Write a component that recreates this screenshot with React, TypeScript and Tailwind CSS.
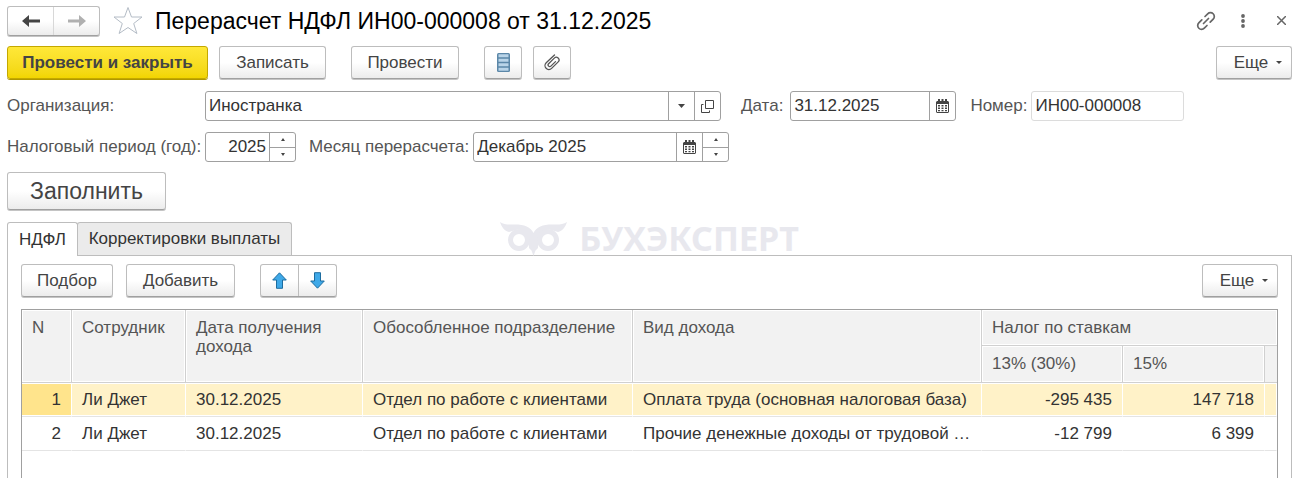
import { ReactNode } from "react";

const buttonBase =
  "flex items-center justify-center rounded-[3px] border border-[#bdbdbd] border-b-[#a0a0a0] bg-linear-to-b from-white from-50% to-[#ececec] text-[#444] shadow-[0_1px_0_#c4c4c4]";

const rows = [
  {
    n: 1,
    employee: "Ли Джет",
    date: "30.12.2025",
    department: "Отдел по работе с клиентами",
    income: "Оплата труда (основная налоговая база)",
    tax13: "-295 435",
    tax15: "147 718",
  },
  {
    n: 2,
    employee: "Ли Джет",
    date: "30.12.2025",
    department: "Отдел по работе с клиентами",
    income: "Прочие денежные доходы от трудовой …",
    tax13: "-12 799",
    tax15: "6 399",
  },
];

function ToolButton({ label, children, className }: { label?: string; children: ReactNode; className: string }) {
  return (
    <button type="button" aria-label={label} className={`${buttonBase} h-[33px] ${className}`}>
      {children}
    </button>
  );
}

function MoreButton() {
  return (
    <button type="button" className={`${buttonBase} h-[33px] w-[76px] gap-2 pl-2`}>
      Еще
      <svg className="h-[3px] w-[6px]" viewBox="0 0 6 3" fill="#444">
        <path d="M0 0h6L3 3z" />
      </svg>
    </button>
  );
}

function CalendarIcon() {
  return (
    <svg className="h-[14px] w-[13px]" viewBox="0 0 13 14">
      <path fill="#444" d="M1 2h1V0h2v2h1.500V0h2v2H9V0h2v2h1l1 1v10l-1 1H1l-1-1V3z" />
      <path fill="#fff" d="M1 5h11v8H1z" />
      <path
        fill="#444"
        d="M2 6h2v1.500H2zM5.500 6h2v1.500h-2zM9 6h2v1.500H9zM2 8.500h2V10H2zM5.500 8.500h2V10h-2zM9 8.500h2V10H9zM2 11h2v1.300H2zM5.500 11h2v1.300h-2zM9 11h2v1.300H9z"
      />
    </svg>
  );
}

function Spinner({ label }: { label: string }) {
  return (
    <div className="flex w-[26px] shrink-0 flex-col border-l border-[#a0a0a0]">
      <button type="button" aria-label={`${label}: больше`} className="flex flex-1 items-center justify-center border-b border-[#a0a0a0]">
        <svg className="h-[3px] w-[4px]" viewBox="0 0 4 3" fill="#444">
          <path d="M0 3h4L2 0z" />
        </svg>
      </button>
      <button type="button" aria-label={`${label}: меньше`} className="flex flex-1 items-center justify-center">
        <svg className="h-[3px] w-[4px]" viewBox="0 0 4 3" fill="#444">
          <path d="M0 0h4L2 3z" />
        </svg>
      </button>
    </div>
  );
}

function FieldButton({ label, children }: { label: string; children: ReactNode }) {
  return (
    <button
      type="button"
      aria-label={label}
      className="flex w-[26px] shrink-0 items-center justify-center border-l border-[#a0a0a0]"
    >
      {children}
    </button>
  );
}

function Watermark() {
  return (
    <div className="pointer-events-none absolute inset-x-0 top-0 flex justify-center gap-3 text-[#e8e8ee]">
      <svg className="h-[34px] w-[67px]" viewBox="0 0 67 34" fill="none">
        <path
          fill="currentColor"
          d="M0 0c4 3 9 2.500 15 2.500C24 2.500 31 5 33.500 11 36 5 43 2.500 52 2.500 58 2.500 63 3 67 0c-1.500 5-4.500 9-9 10l-10-3-9 6-1 13-2.500 2.500-2 5.500-2-5.500L29 26l-1-13-9-6L9 10C4.500 9 1.500 5 0 0z"
        />
        <circle cx="19" cy="18" r="8.500" fill="#fff" stroke="currentColor" strokeWidth="5" />
        <circle cx="48" cy="18" r="8.500" fill="#fff" stroke="currentColor" strokeWidth="5" />
      </svg>
      <span className="font-['Noto_Sans',sans-serif] text-[34px] leading-[32px] font-bold">БУХЭКСПЕРТ</span>
    </div>
  );
}

export default function App() {
  const headCell =
    "border-r border-b border-[#d0d0d0] bg-[#f2f2f2] px-[10px] pt-[8px] text-left align-top leading-[19px] font-normal text-[#555] shadow-[inset_1px_1px_0_#fff,inset_-1px_-1px_0_#fff]";

  return (
    <main className="flex min-h-screen flex-col bg-white pt-[5px] pr-[8px] pl-[7px] font-['Liberation_Sans',Arial,sans-serif] text-[17px] leading-[20px] text-[#333]">
      {/* Title */}
      <header className="flex h-[31px] items-center">
        <div className={`${buttonBase} h-[30px] w-[93px]`}>
          <button type="button" aria-label="Назад" className="flex h-full flex-1 items-center justify-center border-r border-[#d8d8d8]">
            <svg className="h-[14px] w-[18px]" viewBox="0 0 18 14" fill="#444">
              <path d="M0 7l7-6v4.500h11v3H7V13z" />
            </svg>
          </button>
          <button type="button" aria-label="Вперед" className="flex h-full flex-1 items-center justify-center">
            <svg className="h-[14px] w-[18px]" viewBox="0 0 18 14" fill="#b0b0b0">
              <path d="M18 7l-7-6v4.500H0v3h11V13z" />
            </svg>
          </button>
        </div>
        <button type="button" aria-label="В избранное" className="ml-[13px]">
          <svg className="h-[29px] w-[30px]" viewBox="0 0 30 29" fill="#fff" stroke="#b4bcc6">
            <path d="M15 1.500l3.500 9.500H29l-8.300 6.500 3.200 10L15 21.500l-8.900 6 3.200-10L1 11h10.500z" />
          </svg>
        </button>
        <h1 className="ml-3 text-[23px] leading-[28px] text-black">Перерасчет НДФЛ ИН00-000008 от 31.12.2025</h1>
        <div className="ml-auto flex items-center text-[#666]">
          <button type="button" aria-label="Ссылка">
            <svg className="h-[20px] w-[20px]" viewBox="0 0 20 20" fill="none" stroke="currentColor" strokeWidth="1.700" strokeLinecap="round">
              <path d="M9 5.500l2.700-2.700a3.800 3.800 0 0 1 5.500 5.400l-3 3M11 14.500l-2.700 2.700a3.800 3.800 0 0 1-5.500-5.400l3-3M7.500 12.500l5-5" />
            </svg>
          </button>
          <button type="button" aria-label="Меню" className="ml-[25px]">
            <svg className="h-[14px] w-[4px]" viewBox="0 0 4 14" fill="currentColor">
              <circle cx="2" cy="2" r="1.900" />
              <circle cx="2" cy="7" r="1.900" />
              <circle cx="2" cy="12" r="1.900" />
            </svg>
          </button>
          <button type="button" aria-label="Закрыть" className="mr-[6px] ml-[32px]">
            <svg className="h-[9px] w-[9px]" viewBox="0 0 9 9" stroke="currentColor" strokeWidth="1.500">
              <path d="M0 0l9 9M9 0L0 9" />
            </svg>
          </button>
        </div>
      </header>

      {/* Commands */}
      <div className="mt-[10px] flex">
        <button
          type="button"
          className="h-[33px] w-[201px] rounded-[3px] border border-[#c4a800] bg-linear-to-b from-[#ffe838] to-[#f2d500] font-bold text-[#444] shadow-[0_1px_0_#b09800]"
        >
          Провести и закрыть
        </button>
        <ToolButton className="ml-[11px] w-[107px]">Записать</ToolButton>
        <ToolButton className="ml-[25px] w-[108px]">Провести</ToolButton>
        <ToolButton label="Движения документа" className="ml-[25px] w-[38px]">
          <svg className="h-[19px] w-[13px]" viewBox="0 0 13 19">
            <rect width="13" height="19" rx="1.500" fill="#5b87a8" />
            <path fill="#b9d4e8" d="M1.500 1.200h10v3h-10zM1.500 5.700h10v3h-10zM1.500 10.200h10v3h-10zM1.500 14.700h10v3h-10z" />
          </svg>
        </ToolButton>
        <ToolButton label="Присоединенные файлы" className="ml-[11px] w-[38px]">
          <svg className="h-[17px] w-[16px]" viewBox="0 0 16 17" fill="none" stroke="#555" strokeWidth="1.300" strokeLinecap="round">
            <path d="M10.500 1L2.200 8.800a3.800 3.800 0 0 0 5.400 5.600l6.600-6.500a2.700 2.700 0 0 0-3.900-3.800L4.600 9.800a1.600 1.600 0 0 0 2.300 2.300l4.600-4.500" />
          </svg>
        </ToolButton>
        <div className="ml-auto">
          <MoreButton />
        </div>
      </div>

      {/* Fields */}
      <div className="mt-[12px] flex items-center">
        <label htmlFor="organization" className="w-[198px] text-[#555]">Организация:</label>
        <div className="flex h-[30px] w-[516px] rounded-[3px] border border-[#a0a0a0]">
          <input id="organization" defaultValue="Иностранка" className="min-w-0 flex-1 px-[3px] outline-none" />
          <FieldButton label="Выбрать">
            <svg className="h-[4px] w-[7px]" viewBox="0 0 7 4" fill="#444">
              <path d="M0 0h7L3.500 4z" />
            </svg>
          </FieldButton>
          <FieldButton label="Открыть">
            <svg className="h-[13px] w-[13px]" viewBox="0 0 13 13" fill="none" stroke="#444">
              <path d="M4.500.5h8v8h-8zM2.500 4.500h-2v8h8v-2" />
            </svg>
          </FieldButton>
        </div>
        <label htmlFor="date" className="ml-[20px] text-[#555]">Дата:</label>
        <div className="ml-[7px] flex h-[30px] w-[166px] rounded-[3px] border border-[#a0a0a0]">
          <input id="date" defaultValue="31.12.2025" className="min-w-0 flex-1 px-[3px] outline-none" />
          <FieldButton label="Календарь">
            <CalendarIcon />
          </FieldButton>
        </div>
        <label htmlFor="number" className="ml-[14px] text-[#555]">Номер:</label>
        <input
          id="number"
          readOnly
          value="ИН00-000008"
          className="ml-[4px] h-[30px] w-[153px] rounded-[3px] border border-[#dcdcdc] px-[3px] outline-none"
        />
      </div>
      <div className="mt-[11px] flex items-center">
        <label htmlFor="period" className="w-[198px] whitespace-nowrap text-[#555]">Налоговый период (год):</label>
        <div className="flex h-[30px] w-[91px] rounded-[3px] border border-[#a0a0a0]">
          <input id="period" defaultValue="2025" className="min-w-0 flex-1 px-[3px] text-right outline-none" />
          <Spinner label="Год" />
        </div>
        <label htmlFor="month" className="ml-[13px] text-[#555]">Месяц перерасчета:</label>
        <div className="ml-[4px] flex h-[30px] w-[256px] rounded-[3px] border border-[#a0a0a0]">
          <input id="month" defaultValue="Декабрь 2025" className="min-w-0 flex-1 px-[3px] outline-none" />
          <FieldButton label="Календарь">
            <CalendarIcon />
          </FieldButton>
          <Spinner label="Месяц" />
        </div>
      </div>
      <button type="button" className={`${buttonBase} mt-[10px] h-[38px] w-[159px] text-[23px]`}>
        Заполнить
      </button>

      {/* Tabs */}
      <div className="relative mt-[12px] flex h-[33px]" role="tablist">
        <button type="button" role="tab" aria-selected="true" className="z-10 -mb-px w-[71px] rounded-t-[3px] border border-b-0 border-[#bdbdbd] bg-white">
          НДФЛ
        </button>
        <button type="button" role="tab" aria-selected="false" className="-ml-px w-[215px] rounded-t-[3px] border border-b-0 border-[#bdbdbd] bg-[#ebebeb]">
          Корректировки выплаты
        </button>
        <Watermark />
      </div>

      <section className="flex flex-1 flex-col border border-b-0 border-[#bdbdbd] px-[13px] pt-[8px]">
        <div className="flex">
          <ToolButton className="w-[92px]">Подбор</ToolButton>
          <ToolButton className="ml-[13px] w-[109px]">Добавить</ToolButton>
          <div className={`${buttonBase} ml-[25px] h-[33px] w-[77px]`}>
            <button type="button" aria-label="Вверх" className="flex h-full flex-1 items-center justify-center border-r border-[#bdbdbd]">
              <svg className="h-[17px] w-[15px]" viewBox="0 0 15 17" fill="#3fa9e8" stroke="#1d6c9f">
                <path d="M7.500.8L14.300 8h-3.800v8.300h-6V8H.7z" />
              </svg>
            </button>
            <button type="button" aria-label="Вниз" className="flex h-full flex-1 items-center justify-center">
              <svg className="h-[17px] w-[15px]" viewBox="0 0 15 17" fill="#3fa9e8" stroke="#1d6c9f">
                <path d="M7.500 16.200L.7 9h3.800V.7h6V9h3.800z" />
              </svg>
            </button>
          </div>
          <div className="ml-auto">
            <MoreButton />
          </div>
        </div>

        <div className="mt-[12px] flex-1 border border-b-0 border-[#a0a0a0]">
          <table className="w-full table-fixed border-separate border-spacing-0">
            <colgroup>
              <col className="w-[50px]" />
              <col className="w-[114px]" />
              <col className="w-[177px]" />
              <col className="w-[270px]" />
              <col />
              <col className="w-[141px]" />
              <col className="w-[142px]" />
              <col className="w-[12px]" />
            </colgroup>
            <thead>
              <tr className="h-[36px]">
                <th rowSpan={2} className={headCell}>N</th>
                <th rowSpan={2} className={headCell}>Сотрудник</th>
                <th rowSpan={2} className={headCell}>Дата получения дохода</th>
                <th rowSpan={2} className={headCell}>Обособленное подразделение</th>
                <th rowSpan={2} className={headCell}>Вид дохода</th>
                <th colSpan={3} className={`${headCell} border-r-0`}>Налог по ставкам</th>
              </tr>
              <tr className="h-[37px]">
                <th className={headCell}>13% (30%)</th>
                <th className={headCell}>15%</th>
                <th className="border-b border-[#d0d0d0] bg-[#f2f2f2]" />
              </tr>
            </thead>
            <tbody>
              {rows.map((row) => {
                const selected = row.n === 1;
                const line = selected
                  ? "border-r border-b border-r-white border-b-[#e4e4e4] shadow-[inset_0_-1px_0_#fff,inset_0_1px_0_#fff]"
                  : "border-r border-b border-r-transparent border-b-[#e4e4e4]";
                const fill = selected ? "bg-[#fff2c8]" : "bg-white";
                const cell = `${line} ${fill} overflow-hidden px-[10px] whitespace-nowrap`;
                return (
                  <tr key={row.n} className="h-[34px]">
                    <td className={`${line} ${selected ? "bg-[#ffe48c]" : "bg-white"} px-[10px] text-right`}>{row.n}</td>
                    <td className={cell}>{row.employee}</td>
                    <td className={cell}>{row.date}</td>
                    <td className={cell}>{row.department}</td>
                    <td className={cell}>{row.income}</td>
                    <td className={`${cell} text-right`}>{row.tax13}</td>
                    <td className={`${cell} text-right`}>{row.tax15}</td>
                    <td className={`${line} ${fill}`} />
                  </tr>
                );
              })}
            </tbody>
          </table>
        </div>
      </section>
    </main>
  );
}
